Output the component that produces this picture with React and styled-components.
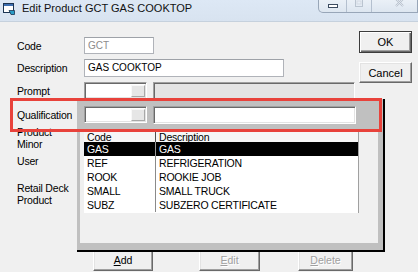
import React from 'react';
import styled, { createGlobalStyle, css } from 'styled-components';

const Global = createGlobalStyle`
  html, body { margin: 0; padding: 0; background: #f0f0f0; }
  body { font-family: "Liberation Sans", Arial, sans-serif; }
  * { box-sizing: border-box; }
`;

const Window = styled.div`
  position: relative;
  width: 418px;
  height: 272px;
  overflow: hidden;
  background: #f0f0f0;
  display: flex;
  flex-direction: column;
`;

const TitleBar = styled.div`
  height: 22px;
  flex: none;
  display: flex;
  align-items: flex-start;
  padding-left: 3px;
  background: linear-gradient(#dde8f5, #d8e3f0);
  border-bottom: 1px solid #c6d1dd;
`;

const AppIcon = styled.svg`
  margin-top: 3px;
  flex: none;
`;

const Title = styled.div`
  margin-left: 7px;
  padding-top: 2px;
  font-size: 11px;
  line-height: 13px;
  color: #111;
  white-space: nowrap;
`;

const Caption = styled.div`
  margin-left: auto;
  flex: none;
  display: flex;
  height: 13px;
  border: 1px solid #98a6b8;
  border-top: none;
  border-radius: 0 0 0 5px;
  overflow: hidden;
  background: linear-gradient(#eaf0f7, #dde6f0);
`;

const CapBtn = styled.div`
  width: ${p => p.$w}px;
  display: flex;
  justify-content: ${p => p.$justify || 'center'};
  align-items: flex-start;
  padding-top: ${p => p.$pt || 0}px;
  padding-left: ${p => p.$pl || 0}px;
  & + & { border-left: 1px solid #b4c0cf; }
`;

const Client = styled.div`
  flex: 1;
  display: flex;
`;

const Form = styled.div`
  flex: 1;
  padding: 15px 0 0 17px;
  display: flex;
  flex-direction: column;
`;

const FieldRow = styled.div`
  display: grid;
  grid-template-columns: 67px auto;
  align-items: ${p => (p.$top ? 'start' : 'center')};
  height: ${p => p.$h}px;
  margin-top: ${p => p.$mt || 0}px;
  flex: none;
`;

const Label = styled.div`
  font-size: 10.5px;
  letter-spacing: -0.2px;
  line-height: 12px;
  color: #000;
  white-space: nowrap;
`;

const Fields = styled.div`
  display: flex;
  gap: 6px;
  align-items: center;
`;

const TextBox = styled.div`
  width: ${p => p.$w}px;
  height: ${p => p.$h}px;
  background: #fff;
  border: 1px solid #b0b3b9;
  border-top-color: #9ea2a8;
  font-size: 10px;
  line-height: ${p => p.$h - 2}px;
  padding-left: 3px;
  color: ${p => (p.$disabled ? '#8c8c8c' : '#000')};
`;

const sunken = css`
  border: 1px solid;
  border-color: #a0a0a0 #ffffff #ffffff #a0a0a0;
  box-shadow: inset 1px 1px #696969, inset -1px -1px #e3e3e3;
`;

const Combo = styled.div`
  ${sunken};
  width: ${p => p.$w}px;
  height: ${p => p.$h}px;
  background: #fff;
  display: flex;
  justify-content: flex-end;
  padding: 2px 1px 1px 2px;
`;

const ComboButton = styled.div`
  width: 14px;
  height: 100%;
  background: #e6e6e6;
  border: 1px solid;
  border-color: #f8f8f8 #a8a8a8 #a8a8a8 #f8f8f8;
`;

const SunkenField = styled.div`
  ${sunken};
  width: ${p => p.$w}px;
  height: ${p => p.$h}px;
  background: ${p => (p.$disabled ? '#e4e4e4' : '#fff')};
`;

const ButtonRow = styled.div`
  display: flex;
  height: 22px;
  margin-top: ${p => p.$mt}px;
  flex: none;
`;

const ClassicButton = styled.div`
  width: ${p => p.$w}px;
  height: 22px;
  margin-left: ${p => p.$ml || 0}px;
  background: #f0f0f0;
  border: 1px solid;
  border-color: #ffffff #696969 #696969 #ffffff;
  box-shadow: inset -1px -1px #a0a0a0, inset 1px 1px #e3e3e3;
  font-size: 10.5px;
  display: flex;
  align-items: center;
  justify-content: center;
  color: ${p => (p.$disabled ? '#a0a0a0' : '#000')};
  text-shadow: ${p => (p.$disabled ? '1px 1px #ffffff' : 'none')};
  flex: none;
`;

const SideColumn = styled.div`
  width: 53px;
  margin-right: 6px;
  padding-top: 9px;
  display: flex;
  flex-direction: column;
  gap: 9px;
  flex: none;
`;

const DialogButton = styled.div`
  height: ${p => p.$h}px;
  background: #f0f0f0;
  border: 1px solid;
  border-color: ${p => (p.$default ? '#3c3c3c' : '#ffffff #696969 #696969 #ffffff')};
  box-shadow: ${p =>
    p.$default
      ? 'inset 1px 1px #ffffff, inset -1px -1px #696969, inset -2px -2px #a0a0a0'
      : 'inset -1px -1px #a0a0a0, inset 1px 1px #e3e3e3'};
  font-size: 11px;
  display: flex;
  align-items: center;
  justify-content: center;
  color: #000;
`;

/* overlays: the drop-down popup of the Qualification combo and the red annotation */
const Popup = styled.div`
  position: absolute;
  left: 77px;
  top: 99px;
  width: 308px;
  height: 153px;
  background: #c0c0c0;
  border-right: 2px solid #000;
  border-bottom: 2px solid #000;
  padding: 7px 0 0 3px;
  display: flex;
  flex-direction: column;
  z-index: 2;
`;

const FilterRow = styled.div`
  display: flex;
  gap: 6px;
  padding-left: 4px;
  height: 17px;
  flex: none;
  align-items: flex-start;
`;

const InnerArea = styled.div`
  flex: 1;
  margin: 9px 5px 7px 0;
  background: #f0f0f0;
  padding-left: 4px;
`;

const List = styled.div`
  width: 275px;
  height: 81px;
  background: #fff;
  border-right: 1px solid #a0a0a0;
  font-size: 10.5px;
  letter-spacing: -0.2px;
`;

const ListHeader = styled.div`
  display: grid;
  grid-template-columns: 72px 1fr;
  height: 10px;
  line-height: 10px;
  background: #f6f6f6;
  overflow: hidden;
`;

const ListRow = styled.div`
  display: grid;
  grid-template-columns: 72px 1fr;
  height: 14px;
  line-height: 14px;
  background: ${p => (p.$selected ? '#000' : '#fff')};
  color: ${p => (p.$selected ? '#fff' : '#000')};
`;

const Cell = styled.div`
  padding-left: 3px;
  white-space: nowrap;
  overflow: hidden;
  border-right: ${p => (p.$divider ? `1px solid ${p.$divider}` : 'none')};
`;

const Highlight = styled.div`
  position: absolute;
  left: 10px;
  top: 98px;
  width: 372px;
  height: 34px;
  border: 3px solid #e8423b;
  z-index: 3;
  pointer-events: none;
`;

const rows = [
  ['GAS', 'GAS'],
  ['REF', 'REFRIGERATION'],
  ['ROOK', 'ROOKIE JOB'],
  ['SMALL', 'SMALL TRUCK'],
  ['SUBZ', 'SUBZERO CERTIFICATE'],
];

export default function App() {
  return (
    <>
      <Global />
      <Window>
        <TitleBar>
          <AppIcon width="12" height="12" viewBox="0 0 12 12">
            <rect x="0.5" y="0.5" width="10" height="9" fill="#ffffff" stroke="#1d3553" />
            <rect x="1" y="1" width="9" height="2" fill="#3d6fb1" />
            <path d="M6 7.5 L11.5 7.5 L11.5 11.5 L8 11.5 Z" fill="#2a9cc6" stroke="#1d3553" strokeWidth="0.8" />
          </AppIcon>
          <Title>Edit Product GCT GAS COOKTOP</Title>
          <Caption>
            <CapBtn $w={27} $pt={4}>
              <svg width="10" height="4" viewBox="0 0 10 4">
                <rect x="0.5" y="0.5" width="9" height="3" fill="#ffffff" stroke="#3b4b60" />
              </svg>
            </CapBtn>
            <CapBtn $w={25} $pt={0}>
              <svg width="8" height="7" viewBox="0 0 8 7">
                <rect x="0.5" y="-1" width="7" height="7.5" fill="none" stroke="#bac4d0" />
                <rect x="2" y="1" width="4" height="3" fill="none" stroke="#d3dae3" />
              </svg>
            </CapBtn>
            <CapBtn $w={46} $justify="flex-start" $pl={23} $pt={0}>
              <svg width="9" height="7" viewBox="0 0 9 7">
                <path d="M1 -1 L8 6 M8 -1 L1 6" stroke="#b7c0cc" strokeWidth="2" />
                <path d="M1 -1 L8 6 M8 -1 L1 6" stroke="#e9eef4" strokeWidth="0.8" />
              </svg>
            </CapBtn>
          </Caption>
        </TitleBar>
        <Client>
          <Form>
            <FieldRow $h={17}>
              <Label>Code</Label>
              <Fields>
                <TextBox $w={70} $h={17} $disabled>GCT</TextBox>
              </Fields>
            </FieldRow>
            <FieldRow $h={17} $mt={5}>
              <Label>Description</Label>
              <Fields>
                <TextBox $w={200} $h={18}>GAS COOKTOP</TextBox>
              </Fields>
            </FieldRow>
            <FieldRow $h={17} $mt={6}>
              <Label>Prompt</Label>
              <Fields>
                <Combo $w={63} $h={17}>
                  <ComboButton />
                </Combo>
                <SunkenField $w={202} $h={17} $disabled />
              </Fields>
            </FieldRow>
            <FieldRow $h={17} $mt={7}>
              <Label>Qualification</Label>
            </FieldRow>
            <FieldRow $h={24} $mt={3} $top>
              <Label>
                Product
                <br />
                Minor
              </Label>
            </FieldRow>
            <FieldRow $h={12} $mt={5} $top>
              <Label>User</Label>
            </FieldRow>
            <FieldRow $h={24} $mt={15} $top>
              <Label>
                Retail Deck
                <br />
                Product
              </Label>
            </FieldRow>
            <ButtonRow $mt={43}>
              <ClassicButton $w={60} $ml={76}>
                <span>
                  <u>A</u>dd
                </span>
              </ClassicButton>
              <ClassicButton $w={61} $ml={46} $disabled>
                <span>
                  <u>E</u>dit
                </span>
              </ClassicButton>
              <ClassicButton $w={55} $ml={38} $disabled>
                <span>
                  <u>D</u>elete
                </span>
              </ClassicButton>
            </ButtonRow>
          </Form>
          <SideColumn>
            <DialogButton $h={22} $default>OK</DialogButton>
            <DialogButton $h={21}>Cancel</DialogButton>
          </SideColumn>
        </Client>

        <Popup>
          <FilterRow>
            <Combo $w={63} $h={17}>
              <ComboButton />
            </Combo>
            <SunkenField $w={203} $h={18} />
          </FilterRow>
          <InnerArea>
            <List>
              <ListHeader>
                <Cell $divider="#505050">Code</Cell>
                <Cell>Description</Cell>
              </ListHeader>
              {rows.map(([code, desc], i) => (
                <ListRow key={code} $selected={i === 0}>
                  <Cell $divider={i === 0 ? '#9a9a9a' : '#8a8a8a'}>{code}</Cell>
                  <Cell>{desc}</Cell>
                </ListRow>
              ))}
            </List>
          </InnerArea>
        </Popup>
        <Highlight />
      </Window>
    </>
  );
}
